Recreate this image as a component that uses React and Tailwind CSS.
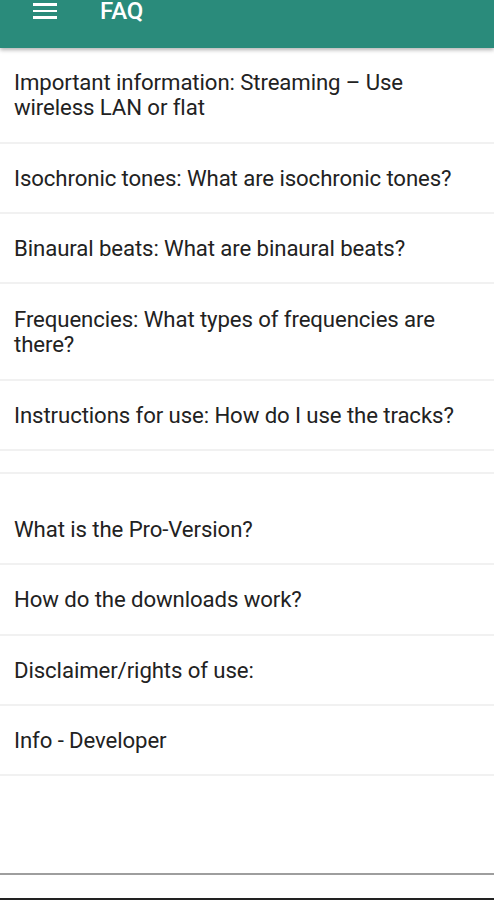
const items = [
  { text: 'Important information: Streaming – Use wireless LAN or flat', h: 'h-[96px]' },
  { text: 'Isochronic tones: What are isochronic tones?', h: 'h-[70px]' },
  { text: 'Binaural beats: What are binaural beats?', h: 'h-[70px]' },
  { text: 'Frequencies: What types of frequencies are there?', h: 'h-[97px]' },
  { text: 'Instructions for use: How do I use the tracks?', h: 'h-[70px]' },
  { text: '', h: 'h-[23px]' },
  { text: 'What is the Pro-Version?', h: 'h-[91px]', extra: 'pt-[22px]' },
  { text: 'How do the downloads work?', h: 'h-[71px]' },
  { text: 'Disclaimer/rights of use:', h: 'h-[70px]' },
  { text: 'Info - Developer', h: 'h-[70px]' },
];

const App = () => {
  return (
    <div className="flex h-[900px] w-[494px] flex-col overflow-hidden bg-white font-['Roboto',sans-serif]">
      <header className="relative z-10 flex h-[48px] shrink-0 items-start bg-[#2a8b7b] shadow-[0_2px_4px_rgba(0,0,0,0.3)]">
        <div className="ml-[33px] mt-[3px] flex w-[24px] flex-col gap-[4px]">
          <span className="h-[2.5px] bg-white" />
          <span className="h-[2.5px] bg-white" />
          <span className="h-[2.5px] bg-white" />
        </div>
        <h1 className="ml-[43px] text-[24px] font-medium leading-[23px] text-white">FAQ</h1>
      </header>
      <ul className="flex flex-col">
        {items.map((item, i) => (
          <li
            key={i}
            className={`flex items-center border-b-2 border-[#f1f1f1] px-[14px] text-[22.2px] leading-[25px] tracking-[-0.1px] text-[#222] ${item.h} ${item.extra || ''}`}
          >
            {item.text}
          </li>
        ))}
      </ul>
      <div className="flex-1" />
      <div className="h-[2px] bg-[#9e9e9e]" />
      <div className="h-[23px] bg-white" />
      <div className="h-[2px] bg-[#222]" />
    </div>
  );
};

export default App;
